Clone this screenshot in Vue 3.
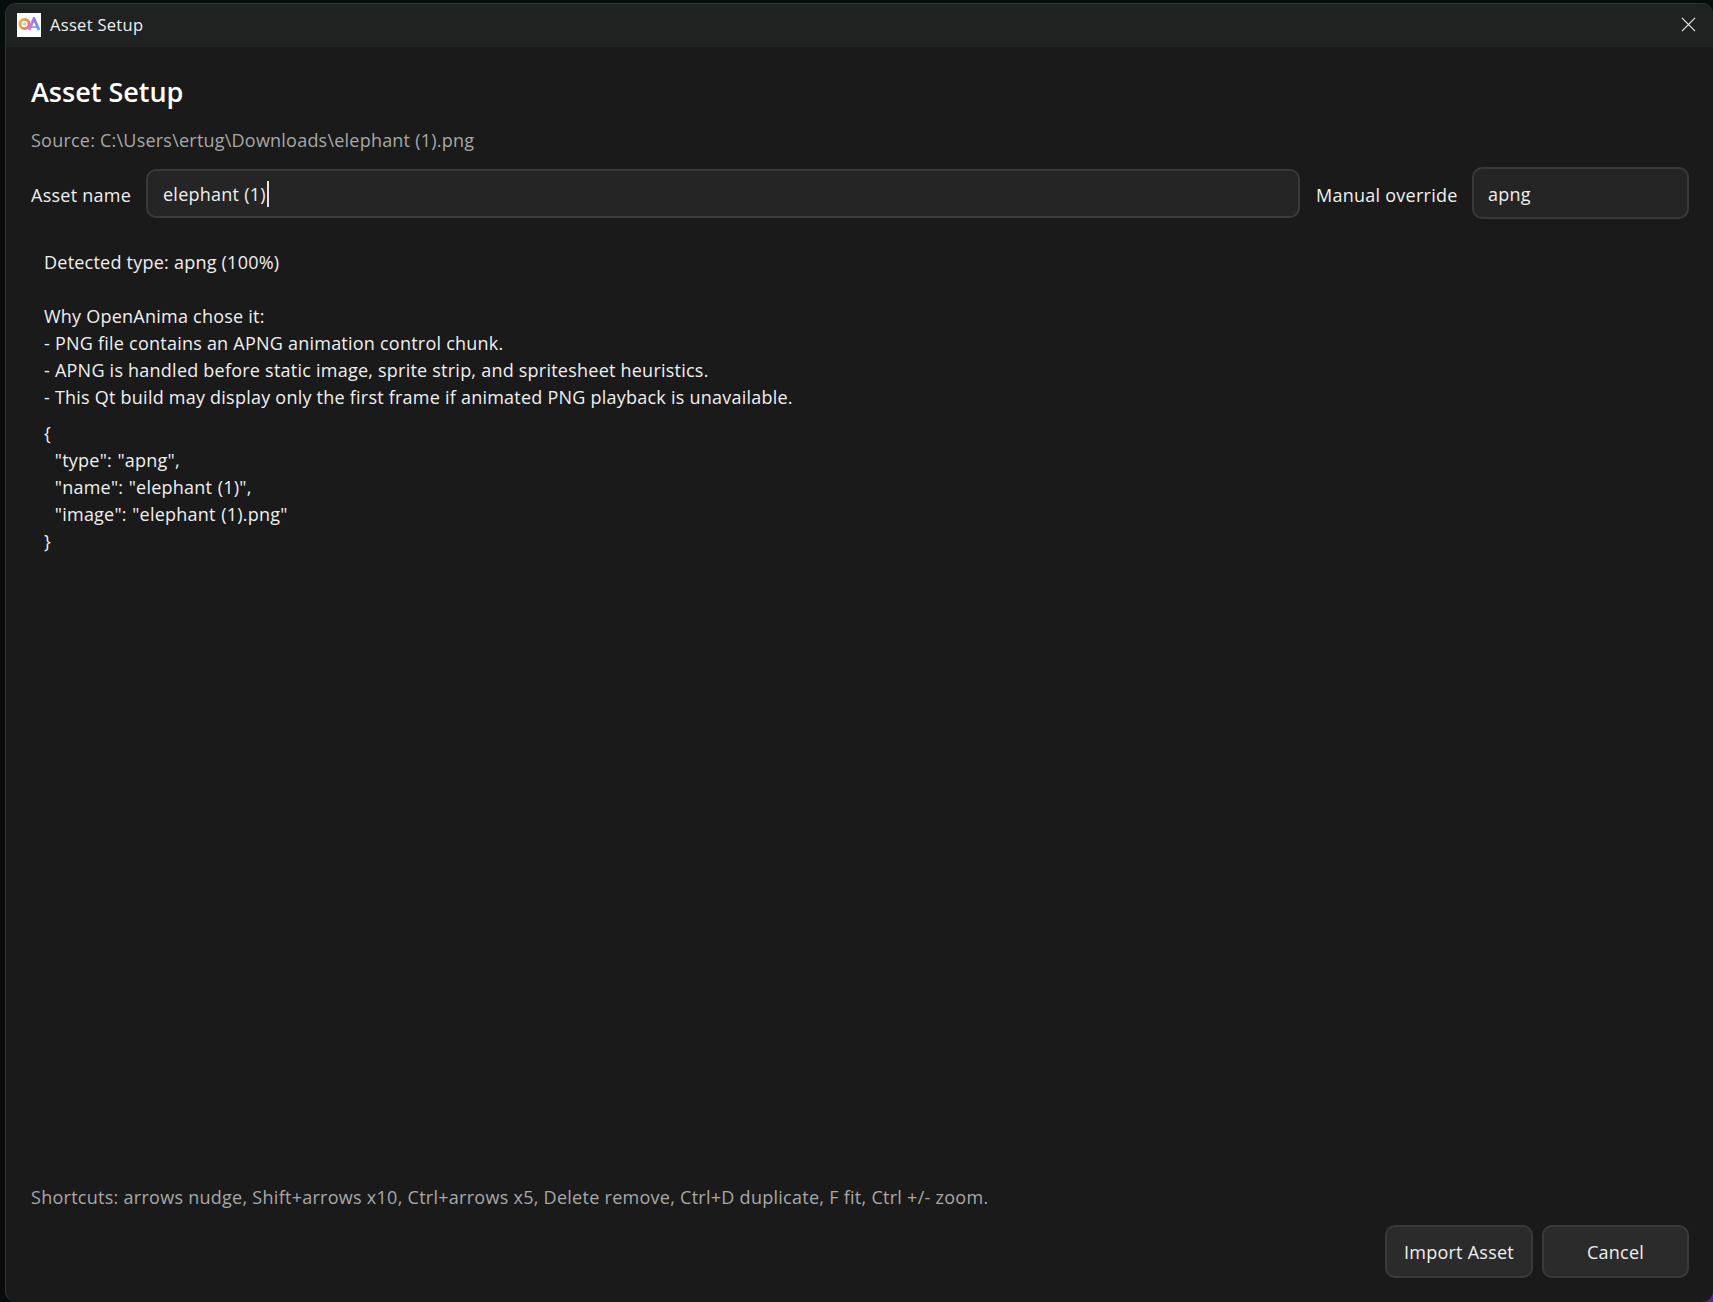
<script setup>
const lines = [
  'Detected type: apng (100%)',
  '',
  'Why OpenAnima chose it:',
  '- PNG file contains an APNG animation control chunk.',
  '- APNG is handled before static image, sprite strip, and spritesheet heuristics.',
  '- This Qt build may display only the first frame if animated PNG playback is unavailable.',
]
const json = ['{', '  "type": "apng",', '  "name": "elephant (1)",', '  "image": "elephant (1).png"', '}']
</script>

<template>
  <div class="screen">
    <div class="window">
      <header class="titlebar">
        <svg class="logo" viewBox="0 0 24 24" width="24" height="24">
          <defs>
            <linearGradient id="ring" x1="0" y1="0" x2="1" y2="0.4">
              <stop offset="0" stop-color="#f7b23c" />
              <stop offset="0.65" stop-color="#f58a3e" />
              <stop offset="1" stop-color="#ee6f9a" />
            </linearGradient>
            <linearGradient id="peak" x1="0" y1="0" x2="1" y2="0">
              <stop offset="0" stop-color="#e778c8" />
              <stop offset="0.5" stop-color="#8f7cf0" />
              <stop offset="1" stop-color="#5aa0f0" />
            </linearGradient>
            <filter id="soft" x="-10%" y="-10%" width="120%" height="120%">
              <feGaussianBlur stdDeviation="0.35" />
            </filter>
          </defs>
          <rect width="24" height="24" fill="#fff" />
          <g filter="url(#soft)">
            <circle cx="7.5" cy="11" r="4.6" fill="none" stroke="url(#ring)" stroke-width="2.8" />
            <circle cx="7.5" cy="11" r="1.6" fill="#cfc4b8" />
            <path d="M12 17 L17 5.5 L22 17" fill="none" stroke="url(#peak)" stroke-width="2.8" />
            <path d="M14 14 L20 14" stroke="#7f8cf0" stroke-width="1.6" />
          </g>
        </svg>
        <span class="title-text">Asset Setup</span>
        <svg class="close" viewBox="0 0 16 16" width="16" height="16">
          <path d="M1 1 L15 15 M15 1 L1 15" stroke="#f0f0f0" stroke-width="1.2" fill="none" />
        </svg>
      </header>

      <main class="body">
        <h1 class="heading">Asset Setup</h1>
        <div class="source">Source: C:\Users\ertug\Downloads\elephant (1).png</div>

        <div class="form-row">
          <span class="label name-label">Asset name</span>
          <div class="input name-input">elephant (1)<i class="caret"></i></div>
          <span class="label override-label">Manual override</span>
          <div class="input combo">apng</div>
        </div>

        <div class="details">
          <div v-for="(l, i) in lines" :key="i" class="line">{{ l }}</div>
          <div class="json">
            <div v-for="(l, i) in json" :key="i" class="line">{{ l }}</div>
          </div>
        </div>

        <div class="shortcuts">Shortcuts: arrows nudge, Shift+arrows x10, Ctrl+arrows x5, Delete remove, Ctrl+D duplicate, F fit, Ctrl +/- zoom.</div>

        <div class="actions">
          <button class="btn import">Import Asset</button>
          <button class="btn">Cancel</button>
        </div>
      </main>
    </div>
  </div>
</template>

<style>
html, body { margin: 0; background: #070c0d; }
</style>

<style scoped>
.screen {
  width: 1713px;
  height: 1302px;
  box-sizing: border-box;
  padding: 3px 0 0 5px;
  background: radial-gradient(circle at 100% 100%, #4b2a90 0 10px, #070c0d 11px);
  font-family: "Open Sans", "Noto Sans", sans-serif;
  letter-spacing: 0.25px;
  color: #f0f0f0;
  overflow: hidden;
}
.window {
  height: 100%;
  box-sizing: border-box;
  display: flex;
  flex-direction: column;
  background: #1a1a1a;
  border-radius: 11px;
  border-left: 1px solid #333;
  border-top: 1px solid #333;
  overflow: hidden;
}
.titlebar {
  height: 43px;
  box-sizing: border-box;
  flex: none;
  display: flex;
  align-items: center;
  padding: 0 17px 2px 11px;
  background: #202222;
}
.logo { flex: none; }
.title-text {
  margin-left: 9px;
  font-size: 16.5px;
  letter-spacing: 0.3px;
  flex: 1;
}
.close { flex: none; width: 15px; height: 15px; }
.body {
  flex: 1;
  min-height: 0;
  display: flex;
  flex-direction: column;
  padding: 0 24px 24px 25px;
}
.heading {
  margin: 26px 0 0;
  font-size: 27px;
  line-height: 38px;
  font-weight: 600;
  letter-spacing: 0;
  color: #fff;
}
.source {
  margin-top: 16px;
  font-size: 18px;
  line-height: 26px;
  letter-spacing: 0.22px;
  color: #a8a8a8;
}
.form-row {
  margin-top: 14px;
  display: flex;
  align-items: center;
  height: 52px;
}
.label {
  font-size: 18px;
  flex: none;
  color: #f0f0f0;
  padding-top: 3px;
  white-space: nowrap;
}
.name-label { width: 115px; }
.input {
  box-sizing: border-box;
  background: #252525;
  border: 2px solid #3a3a3a;
  border-radius: 10px;
  font-size: 18px;
  display: flex;
  align-items: center;
  padding-top: 2px;
}
.name-input {
  flex: 1;
  height: 49px;
  padding-left: 15px;
}
.caret {
  width: 2px;
  height: 26px;
  background: #e4e4e4;
  margin-left: 1px;
}
.override-label { margin: 0 16px; width: 140px; }
.combo {
  width: 217px;
  height: 52px;
  padding-left: 14px;
}
.details {
  margin-top: 30px;
  padding-left: 13px;
  font-size: 18px;
  line-height: 27px;
  letter-spacing: 0.23px;
  white-space: pre;
  flex: 1;
  min-height: 0;
}
.line { min-height: 27px; }
.json { margin-top: 9px; word-spacing: 0.5px; }
.shortcuts {
  font-size: 18px;
  line-height: 26px;
  letter-spacing: 0.27px;
  color: #a8a8a8;
}
.actions {
  margin-top: 15px;
  display: flex;
  justify-content: flex-end;
  gap: 9px;
}
.btn {
  width: 147px;
  height: 53px;
  background: #2b2b2b;
  border: 2px solid #3a3a3a;
  border-radius: 10px;
  color: #f0f0f0;
  font: inherit;
  font-size: 18px;
  letter-spacing: 0.25px;
}
.import { width: 148px; }
</style>
